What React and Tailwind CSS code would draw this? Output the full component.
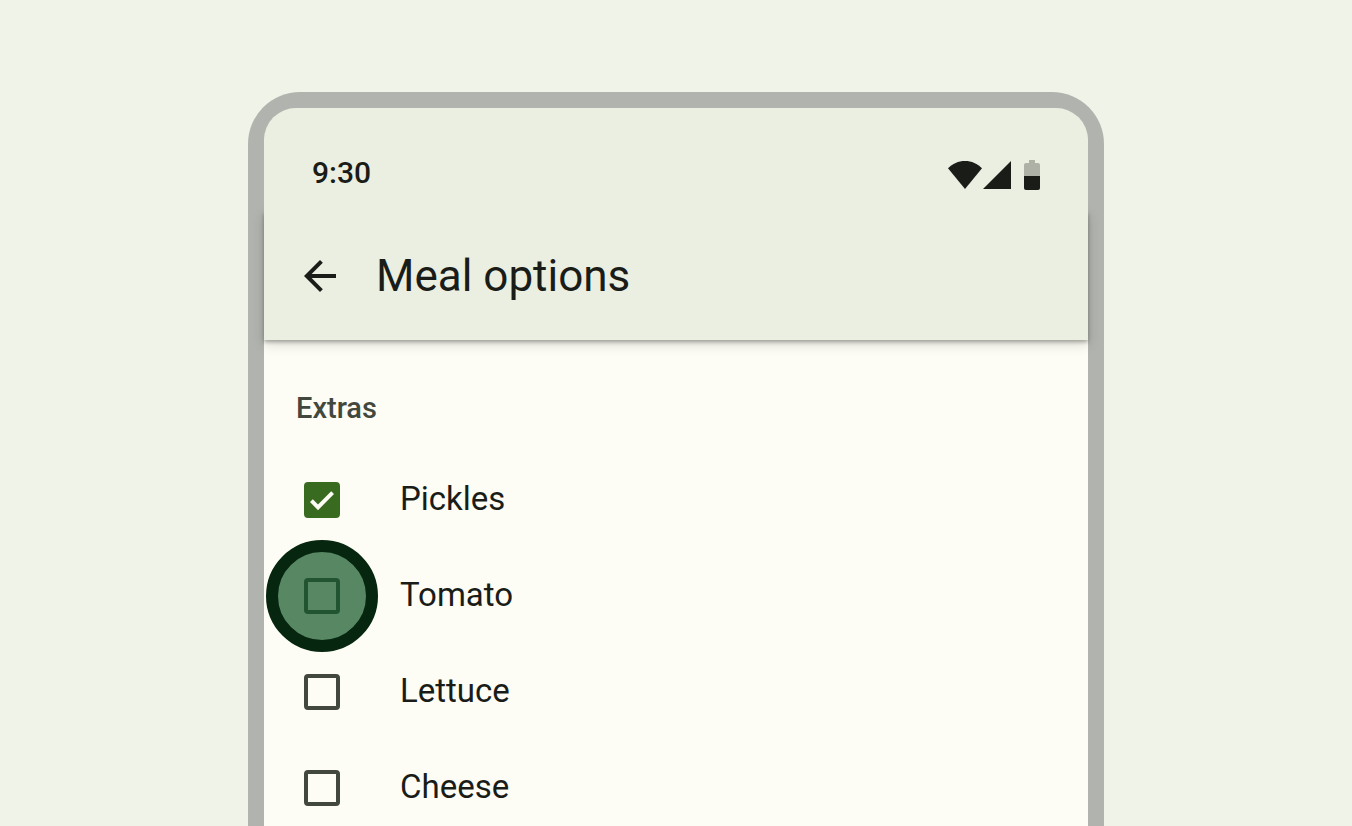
import { useState } from "react";

const EXTRAS = ["Pickles", "Tomato", "Lettuce", "Cheese"];

function StatusIcons() {
  return (
    <div className="flex items-center" aria-hidden="true">
      <svg className="h-[30px] w-[34px]" viewBox="0 0 34 30" fill="currentColor">
        <path d="M17 29 0 8.3C4.4 3.600 10.400 1 17 1s12.600 2.600 17 7.300Z" />
      </svg>
      <svg className="ml-px h-[30px] w-[28px]" viewBox="0 0 28 30" fill="currentColor">
        <path d="M0 29 28 1v28Z" />
      </svg>
      <svg className="ml-[13px] h-[30px] w-4" viewBox="0 0 16 30" fill="currentColor">
        <path d="M0 16V5q0-2 2-2h3V0h6v3h3q2 0 2 2v11Z" fill="#adb1a6" />
        <path d="M0 16h16v12q0 2-2 2H2q-2 0-2-2Z" />
      </svg>
    </div>
  );
}

function ExtraRow({ name, checked, highlighted, onToggle }) {
  return (
    <li>
      <label className="flex h-24 items-center gap-[60px] px-10">
        <span className="relative grid size-9 shrink-0">
          {highlighted && (
            <span className="absolute -inset-[38px] rounded-full border-[12px] border-[#07260f] bg-[#578863]" />
          )}
          <input
            type="checkbox"
            checked={checked}
            onChange={onToggle}
            className={
              "relative col-start-1 row-start-1 size-9 appearance-none rounded-[4px] border-4 checked:border-[#386a1f] checked:bg-[#386a1f] " +
              (highlighted ? "border-[#225432]" : "border-[#43483f]")
            }
          />
          {checked && (
            <svg
              className="pointer-events-none relative col-start-1 row-start-1 size-9"
              viewBox="0 0 36 36"
              fill="#fdfdf5"
              aria-hidden="true"
            >
              <path d="M14 28.200 6 20l2.800-2.800 5.200 5.200L27.200 9.200 30 12Z" />
            </svg>
          )}
        </span>
        <span className="pb-0.5 text-[33px] leading-10">{name}</span>
      </label>
    </li>
  );
}

export default function App() {
  const [selected, setSelected] = useState(["Pickles"]);

  const toggle = (name) =>
    setSelected((current) =>
      current.includes(name) ? current.filter((item) => item !== name) : [...current, name]
    );

  return (
    <div className="flex h-screen justify-center overflow-hidden bg-[#f0f3e8] px-4 pt-[92px] font-['Roboto',sans-serif] text-[#1a1c18]">
      <div className="h-max min-h-full w-full max-w-[856px] rounded-t-[52px] border-16 border-b-0 border-[#b1b4ae] bg-[#fdfdf5]">
        <div className="relative z-10 flex h-[104px] items-center justify-between rounded-t-[32px] bg-[#ebefe1] px-12 pt-[30px]">
          <span className="pb-1 text-[30px] leading-9 font-medium">9:30</span>
          <StatusIcons />
        </div>
        <header className="flex h-32 items-center gap-8 bg-[#ebefe1] px-8 shadow-[0_2px_4px_rgba(0,0,0,0.3),0_4px_12px_rgba(0,0,0,0.15)]">
          <button type="button" aria-label="Back" className="grid size-12 place-items-center">
            <svg className="size-12" viewBox="0 0 24 24" fill="currentColor" aria-hidden="true">
              <path d="M20 11H7.830l5.590-5.590L12 4l-8 8 8 8 1.410-1.410L7.830 13H20v-2Z" />
            </svg>
          </button>
          <h1 className="text-[44px] leading-[56px]">Meal options</h1>
        </header>
        <main className="pt-12">
          <h2 className="px-8 pb-6 text-[29px] leading-10 font-medium text-[#43483f]">Extras</h2>
          <ul>
            {EXTRAS.map((name) => (
              <ExtraRow
                key={name}
                name={name}
                checked={selected.includes(name)}
                highlighted={name === "Tomato"}
                onToggle={() => toggle(name)}
              />
            ))}
          </ul>
        </main>
      </div>
    </div>
  );
}
